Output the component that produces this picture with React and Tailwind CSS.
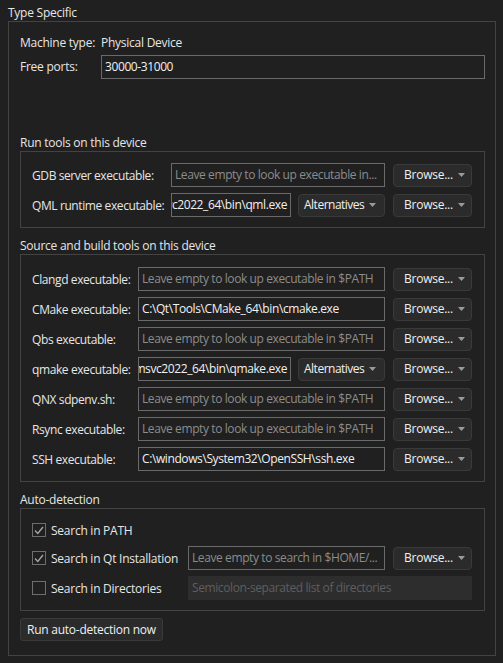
import React from 'react';

const font = { fontFamily: '"Open Sans", "Noto Sans", sans-serif' };

const Arrow = () => (
  <svg width="7" height="4" viewBox="0 0 7 4" className="shrink-0">
    <path d="M0 0 L7 0 L3.5 4 Z" fill="#9a9a9a" />
  </svg>
);

const DropButton = ({ label, className = '' }) => (
  <div
    className={`h-[23px] shrink-0 flex items-center justify-between gap-[5px] rounded-[4px] bg-[#2b2b2b] border border-[#3a3a3a] text-[#f0f0f0] whitespace-nowrap ${className}`}
  >
    <span>{label}</span>
    <Arrow />
  </div>
);

const Browse = () => <DropButton label="Browse..." className="ml-[8px] w-[79px] pl-[10px] pr-[8px]" />;
const Alternatives = () => (
  <DropButton label="Alternatives" className="ml-[7px] w-[87px] pl-[5px] pr-[8px] tracking-[-0.5px]" />
);

const Input = ({ value, placeholder, className = '', end = false }) => (
  <div
    className={`h-[24px] shrink-0 flex items-center border border-[#6a6a6a] overflow-hidden whitespace-nowrap px-[3px] tracking-[-0.4px] ${end ? 'justify-end' : ''} ${className}`}
  >
    {value ? (
      <span className="text-[#f0f0f0] shrink-0">{value}</span>
    ) : (
      <span className="text-[#8c8c8c] shrink-0">{placeholder}</span>
    )}
  </div>
);

const Section = ({ title, children, className = '' }) => (
  <div className={className}>
    <div className="h-[16px] leading-[16px] text-[#e6e6e6] whitespace-nowrap">{title}</div>
    <div className="border border-[#434343] pl-[11px] pr-[12px]">{children}</div>
  </div>
);

const Row = ({ label, labelW, children }) => (
  <div className="flex items-center h-[24px]">
    <div className={`shrink-0 whitespace-nowrap pt-[2px] tracking-[-0.4px] ${labelW} text-[#e6e6e6]`}>{label}</div>
    {children}
  </div>
);

const PH = 'Leave empty to look up executable in $PATH';

const Check = ({ checked, label }) => (
  <div className="flex items-center gap-[5px] whitespace-nowrap">
    <div className="w-[14px] h-[14px] shrink-0 border border-[#6e6e6e] flex items-center justify-center">
      {checked && (
        <svg width="10" height="9" viewBox="0 0 10 9">
          <path d="M1 4.5 L3.8 7.5 L9 1" stroke="#a8a8a8" strokeWidth="1.3" fill="none" />
        </svg>
      )}
    </div>
    <span className="text-[#e6e6e6] pt-[2px]">{label}</span>
  </div>
);

export default function App() {
  return (
    <div
      style={font}
      className="w-[503px] h-[663px] bg-[#202020] text-[12px] tracking-[-0.25px] leading-[16px] overflow-hidden"
    >
      <div className="pl-[8px] pt-[5px] h-[21px] text-[#e6e6e6]">Type Specific</div>
      <div className="ml-[8px] w-[488px] h-[635px] border border-[#434343] pl-[11px] pr-[10px] pt-[11px]">
        <div className="flex items-center h-[20px]">
          <div className="w-[81px] text-[#e6e6e6] whitespace-nowrap">Machine type:</div>
          <div className="text-[#e6e6e6]">Physical Device</div>
        </div>
        <div className="flex items-center mt-[2px]">
          <div className="w-[81px] text-[#e6e6e6] whitespace-nowrap">Free ports:</div>
          <Input value="30000-31000" className="flex-1" />
        </div>

        <Section title="Run tools on this device" className="mt-[56px]">
          <div className="pt-[11px] pb-[10px] flex flex-col gap-[6px]">
            <Row label="GDB server executable:" labelW="w-[139px]">
              <Input placeholder="Leave empty to look up executable in..." className="w-[214px]" />
              <Browse />
            </Row>
            <Row label="QML runtime executable:" labelW="w-[139px]">
              <Input value="C:\Qt\6.8.0\msvc2022_64\bin\qml.exe" end className="w-[120px]" />
              <Alternatives />
              <Browse />
            </Row>
          </div>
        </Section>

        <Section title="Source and build tools on this device" className="mt-[10px]">
          <div className="pt-[12px] pb-[10px] flex flex-col gap-[6px]">
            <Row label="Clangd executable:" labelW="w-[106px]">
              <Input placeholder={PH} className="w-[247px]" />
              <Browse />
            </Row>
            <Row label="CMake executable:" labelW="w-[106px]">
              <Input value="C:\Qt\Tools\CMake_64\bin\cmake.exe" className="w-[247px]" />
              <Browse />
            </Row>
            <Row label="Qbs executable:" labelW="w-[106px]">
              <Input placeholder={PH} className="w-[247px]" />
              <Browse />
            </Row>
            <Row label="qmake executable:" labelW="w-[106px]">
              <Input value="C:\Qt\6.8.0\msvc2022_64\bin\qmake.exe" end className="w-[153px]" />
              <Alternatives />
              <Browse />
            </Row>
            <Row label="QNX sdpenv.sh:" labelW="w-[106px]">
              <Input placeholder={PH} className="w-[247px]" />
              <Browse />
            </Row>
            <Row label="Rsync executable:" labelW="w-[106px]">
              <Input placeholder={PH} className="w-[247px]" />
              <Browse />
            </Row>
            <Row label="SSH executable:" labelW="w-[106px]">
              <Input value="C:\windows\System32\OpenSSH\ssh.exe" className="w-[247px]" />
              <Browse />
            </Row>
          </div>
        </Section>

        <Section title="Auto-detection" className="mt-[10px]">
          <div className="pt-[11px] pb-[10px] flex flex-col">
            <div className="h-[20px] flex items-center">
              <Check checked label="Search in PATH" />
            </div>
            <div className="h-[24px] flex items-center mt-[6px]">
              <div className="w-[156px] shrink-0">
                <Check checked label="Search in Qt Installation" />
              </div>
              <Input placeholder="Leave empty to search in $HOME/..." className="w-[197px]" />
              <Browse />
            </div>
            <div className="h-[24px] flex items-center mt-[6px]">
              <div className="w-[156px] shrink-0">
                <Check label="Search in Directories" />
              </div>
              <div className="w-[284px] h-[24px] bg-[#2d2d2d] flex items-center px-[4px] text-[#5e5e5e] tracking-[-0.4px] whitespace-nowrap overflow-hidden">
                Semicolon-separated list of directories
              </div>
            </div>
          </div>
        </Section>

        <div className="mt-[7px] inline-flex h-[23px] items-center px-[6px] rounded-[3px] bg-[#2b2b2b] border border-[#3a3a3a] text-[#f0f0f0] whitespace-nowrap">
          Run auto-detection now
        </div>
      </div>
    </div>
  );
}
